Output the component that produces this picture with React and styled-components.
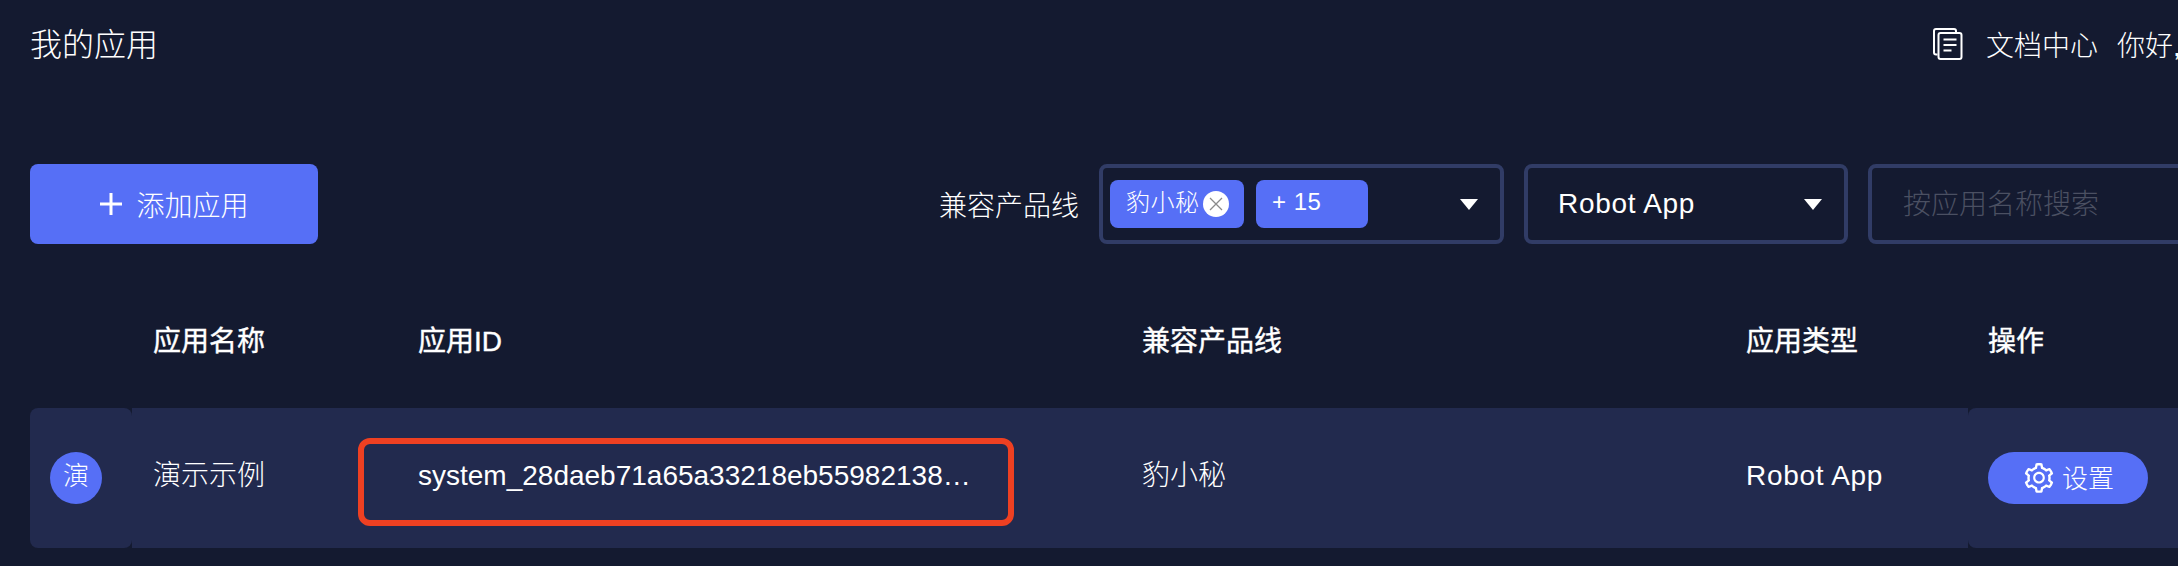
import styled, { createGlobalStyle } from "styled-components";
import { AiOutlineSetting } from "react-icons/ai";

const Global = createGlobalStyle`
    html, body {
        margin: 0;
        padding: 0;
        background: #141a30;
        overflow: hidden;
    }
    body {
        font-family: "Liberation Sans", "Noto Sans CJK SC", sans-serif;
        color: #fff;
    }
`;

const Page = styled.div`
    width: 2178px;
    height: 566px;
    overflow: hidden;
    background: #141a30;
`;

const TopBar = styled.div`
    height: 88px;
    padding-left: 30px;
    display: flex;
    align-items: center;
    justify-content: space-between;
`;

const Title = styled.h1`
    margin: 0;
    padding-top: 2px;
    font-size: 32px;
    font-weight: 300;
    line-height: 40px;
`;

const TopLinks = styled.div`
    flex: none;
    width: 245px;
    display: flex;
    align-items: center;
    font-size: 28px;
    font-weight: 300;
    white-space: nowrap;
    color: #fff;
    svg {
        flex: none;
    }
`;

const DocLink = styled.span`
    margin-left: 23px;
    margin-right: 19px;
`;

const Toolbar = styled.div`
    margin-top: 76px;
    height: 80px;
    padding-left: 30px;
    display: flex;
    align-items: center;
`;

const AddButton = styled.button`
    width: 288px;
    height: 80px;
    border: 0;
    border-radius: 8px;
    background: #566ff6;
    color: #fff;
    font: inherit;
    font-size: 28px;
    font-weight: 300;
    display: flex;
    align-items: center;
    justify-content: center;
    gap: 13px;
`;

const Filters = styled.div`
    margin-left: auto;
    width: 1239px;
    flex: none;
    display: flex;
    align-items: center;
`;

const FilterLabel = styled.span`
    flex: none;
    width: 160px;
    font-size: 28px;
    font-weight: 300;
    white-space: nowrap;
    color: #fff;
`;

const Select = styled.div`
    width: ${(p) => p.$width}px;
    height: 80px;
    box-sizing: border-box;
    margin-right: 20px;
    flex: none;
    border: 4px solid #313c66;
    border-radius: 8px;
    display: flex;
    align-items: center;
    justify-content: space-between;
    padding: 0 22px 0 ${(p) => p.$left}px;
    font-size: 28px;
    letter-spacing: 0.7px;
`;

const Tags = styled.div`
    display: flex;
    gap: 12px;
`;

const Tag = styled.span`
    width: ${(p) => p.$width}px;
    height: 48px;
    box-sizing: border-box;
    padding-left: 16px;
    border-radius: 8px;
    background: #566ff6;
    font-size: 24px;
    font-weight: 300;
    letter-spacing: 0.5px;
    display: flex;
    align-items: center;
    gap: 3px;
`;

const Lifted = styled.span`
    display: block;
    padding-bottom: ${(p) => p.$by}px;
`;

const Arrow = styled.i`
    width: 0;
    height: 0;
    border-left: 9px solid transparent;
    border-right: 9px solid transparent;
    border-top: 11px solid #fff;
`;

const SearchBox = styled(Select)`
    color: #4b5062;
    font-weight: 300;
    letter-spacing: 0;
`;

const HeaderRow = styled.div`
    margin-top: 28px;
    height: 136px;
    display: grid;
    grid-template-columns: 102px 265px 724px 604px 243px 240px;
    align-items: center;
    margin-left: 30px;
    font-size: 28px;
    -webkit-text-stroke: 0.4px #fff;
`;

const HeadCell = styled.div`
    padding: 0 0 3px ${(p) => (p.$tight ? 20 : 21)}px;
`;

const Row = styled.div`
    height: 140px;
    margin-left: 30px;
    display: grid;
    grid-template-columns: 102px 265px 724px 604px 243px 240px;
    font-size: 28px;
    font-weight: 300;
`;

const Cell = styled.div`
    position: relative;
    background: #222a4e;
    display: flex;
    align-items: center;
    padding-left: ${(p) => (p.$round ? 20 : 21)}px;
    min-width: 0;
    color: #fff;
    border-radius: ${(p) => (p.$round ? "8px" : "0")};
`;

const Avatar = styled.span`
    width: 52px;
    height: 52px;
    box-sizing: border-box;
    padding-bottom: 9px;
    border-radius: 50%;
    background: #566ff6;
    color: #fff;
    font-size: 26px;
    display: flex;
    align-items: center;
    justify-content: center;
`;

const AppType = styled.span`
    display: block;
    padding-bottom: 5px;
    letter-spacing: 0.7px;
`;

const IdText = styled.span`
    display: block;
    width: 556px;
    padding-bottom: 5px;
    overflow: hidden;
    white-space: nowrap;
    text-overflow: ellipsis;
`;

const Highlight = styled.span`
    position: absolute;
    left: -39px;
    top: 30px;
    width: 656px;
    height: 88px;
    box-sizing: border-box;
    border: 6px solid #ee4022;
    border-radius: 12px;
`;

const SettingButton = styled.button`
    width: 160px;
    height: 52px;
    border: 0;
    border-radius: 26px;
    background: #566ff6;
    color: #fff;
    font: inherit;
    font-size: 26px;
    font-weight: 300;
    display: flex;
    align-items: center;
    justify-content: center;
    gap: 6px;
    padding: 0;
`;

function DocIcon() {
    return (
        <svg width="30" height="32" viewBox="0 0 30 32" fill="none" stroke="#fff" strokeWidth="2" strokeLinejoin="round">
            <path d="M4.500 26.500H3a2 2 0 0 1-2-2V3a2 2 0 0 1 2-2h18a2 2 0 0 1 2 2v1.500" />
            <rect x="5.500" y="5" width="23" height="26" rx="2" />
            <path d="M10.500 11.500h13M10.500 17h13M10.500 22.500h8" />
        </svg>
    );
}

function CloseDot() {
    return (
        <svg width="26" height="26" viewBox="0 0 26 26">
            <circle cx="13" cy="13" r="13" fill="#fff" />
            <path d="M7 7l12 12M19 7L7 19" stroke="#8a8a8a" strokeWidth="1.300" />
        </svg>
    );
}

function PlusIcon() {
    return (
        <svg width="24" height="24" viewBox="0 0 24 24">
            <path d="M12 1v22M1 12h22" stroke="#fff" strokeWidth="3" />
        </svg>
    );
}

export default function App() {
    return (
        <Page>
            <Global />
            <TopBar>
                <Title>我的应用</Title>
                <TopLinks>
                    <DocIcon />
                    <DocLink>文档中心</DocLink>
                    <span>你好,</span>
                </TopLinks>
            </TopBar>
            <Toolbar>
                <AddButton>
                    <PlusIcon />
                    添加应用
                </AddButton>
                <Filters>
                    <FilterLabel>兼容产品线</FilterLabel>
                    <Select $width={405} $left={7}>
                        <Tags>
                            <Tag $width={134}>
                                <Lifted $by={7}>豹小秘</Lifted>
                                <CloseDot />
                            </Tag>
                            <Tag $width={112}>
                                <Lifted $by={5}>+ 15</Lifted>
                            </Tag>
                        </Tags>
                        <Arrow />
                    </Select>
                    <Select $width={324} $left={30}>
                        <span>Robot App</span>
                        <Arrow />
                    </Select>
                    <SearchBox $width={330} $left={31}>
                        <Lifted $by={4}>按应用名称搜索</Lifted>
                    </SearchBox>
                </Filters>
            </Toolbar>
            <HeaderRow>
                <span />
                <HeadCell>应用名称</HeadCell>
                <HeadCell>应用ID</HeadCell>
                <HeadCell>兼容产品线</HeadCell>
                <HeadCell>应用类型</HeadCell>
                <HeadCell $tight>操作</HeadCell>
            </HeaderRow>
            <Row>
                <Cell $round>
                    <Avatar>演</Avatar>
                </Cell>
                <Cell>
                    <Lifted $by={10}>演示示例</Lifted>
                </Cell>
                <Cell>
                    <IdText>system_28daeb71a65a33218eb559821380d0f4a1</IdText>
                    <Highlight />
                </Cell>
                <Cell>
                    <Lifted $by={10}>豹小秘</Lifted>
                </Cell>
                <Cell>
                    <AppType>Robot App</AppType>
                </Cell>
                <Cell $round>
                    <SettingButton>
                        <AiOutlineSetting size={34} />
                        <Lifted $by={3}>设置</Lifted>
                    </SettingButton>
                </Cell>
            </Row>
        </Page>
    );
}
